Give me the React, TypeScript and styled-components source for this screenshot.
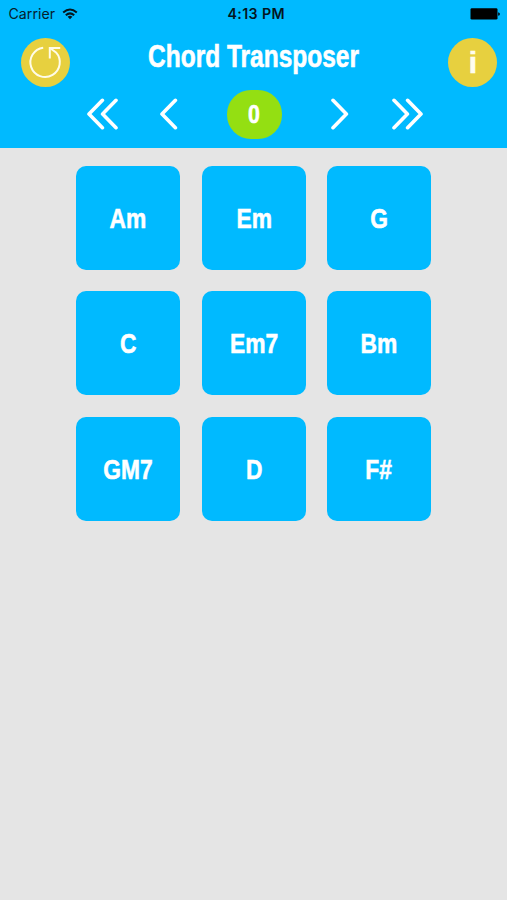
import React from "react";
import styled, { createGlobalStyle } from "styled-components";

const GlobalStyle = createGlobalStyle`
  body { margin: 0; background: #e5e5e5; }
  button { appearance: none; border: 0; padding: 0; margin: 0; background: none; color: inherit; font: inherit; }
  svg { display: block; }
`;

const Screen = styled.div`
  width: 507px;
  height: 900px;
  overflow: hidden;
  background: #e5e5e5;
  color: #fff;
  font-family: "Liberation Sans", Arial, sans-serif;
`;

const Header = styled.header`
  height: 147.5px;
  background: #00baff;
`;

const StatusBar = styled.div`
  display: grid;
  grid-template-columns: 1fr auto 1fr;
  align-items: center;
  height: 27px;
  padding: 0 7px 0 8.5px;
  box-sizing: border-box;
  color: #06202c;
  font: 400 14.2px/27px Inter, "Liberation Sans", sans-serif;
`;

const Carrier = styled.div`
  display: flex;
  align-items: center;
  gap: 6.5px;
`;

const Clock = styled.div`
  padding-left: 4px;
  font-weight: 600;
  letter-spacing: 0.4px;
  color: #04161f;
`;

const Battery = styled.svg`
  justify-self: end;
`;

const TitleBar = styled.div`
  display: flex;
  justify-content: space-between;
  height: 49px;
  padding: 10.5px 9.7px 0 20.7px;
`;

const RoundButton = styled.button`
  display: flex;
  align-items: center;
  justify-content: center;
  width: 49px;
  height: 49px;
  border-radius: 50%;
  background: #e7d03f;
`;

const InfoLetter = styled.span`
  color: #fffdf0;
  font-size: 30px;
  font-weight: 700;
  line-height: 49px;
  -webkit-text-stroke: 0.6px currentColor;
`;

const Title = styled.h1`
  display: flex;
  justify-content: center;
  flex: 1;
  margin: 0;
  padding-right: 11px;
  font-size: 31px;
  line-height: 37px;
`;

const Condensed = styled.span<{ $ratio: number }>`
  display: inline-block;
  font-weight: 700;
  white-space: nowrap;
  -webkit-text-stroke: 0.6px currentColor;
  transform: scaleX(${(p) => p.$ratio});
`;

const Stepper = styled.nav`
  display: grid;
  grid-template-columns: 67px 67px 103px 69.5px 65px;
  justify-items: center;
  align-items: center;
  height: 49px;
  padding: 3.2px 0 0 68.5px;
`;

const Offset = styled.div`
  display: flex;
  align-items: center;
  justify-content: center;
  width: 55px;
  height: 49px;
  border-radius: 24px;
  background: #94df12;
  font-size: 25px;
  line-height: 51px;
`;

const ChordGrid = styled.main`
  display: grid;
  grid-template-columns: 125.7px 124.7px 104px;
  grid-auto-rows: 104px;
  row-gap: 21.7px;
  padding: 18.2px 0 0 76.3px;
`;

const Chord = styled.button`
  display: flex;
  align-items: center;
  justify-content: center;
  width: 104px;
  height: 104px;
  border-radius: 10px;
  background: #00baff;
  font-size: 28.5px;
  line-height: 32px;
`;

const chords = ["Am", "Em", "G", "C", "Em7", "Bm", "GM7", "D", "F#"];

function Chevron({ count = 1, forward = false }: { count?: number; forward?: boolean }) {
  const width = count === 2 ? 31 : 18;
  const heads = Array.from({ length: count }, (_, i) => {
    const x = i * 13.6;
    return forward ? `M${x + 2} 2.3 L${x + 15.4} 16 L${x + 2} 29.7` : `M${x + 15.4} 2.3 L${x + 2} 16 L${x + 15.4} 29.7`;
  });
  return (
    <svg width={width} height="32" viewBox={`0 0 ${width} 32`} fill="none" stroke="#fff" strokeWidth="3.6" strokeLinecap="round" strokeLinejoin="round">
      <path d={heads.join(" ")} />
    </svg>
  );
}

export default function App() {
  return (
    <>
      <GlobalStyle />
      <Screen>
        <Header>
          <StatusBar>
            <Carrier>
              Carrier
              <svg width="16" height="12" viewBox="0 0 16 12" fill="none" stroke="#04161f" strokeWidth="2">
                <path d="M1.2 4.4 Q8 -1.5 14.8 4.4" />
                <path d="M3.8 7.2 Q8 3.6 12.2 7.2" />
                <path d="M5.6 8.7 Q8 6.8 10.4 8.7 L8 11.2Z" fill="#04161f" stroke="none" />
              </svg>
            </Carrier>
            <Clock>4:13 PM</Clock>
            <Battery width="30" height="12" viewBox="0 0 30 12" fill="#000">
              <rect x="0.5" y="0.2" width="27" height="11.4" rx="1.4" />
              <path d="M28.2 4.2 Q29.9 4.6 29.9 6 Q29.9 7.4 28.2 7.8Z" />
            </Battery>
          </StatusBar>
          <TitleBar>
            <RoundButton aria-label="Reset">
              <svg width="49" height="49" viewBox="0 0 49 49" fill="none" stroke="#fffce8" strokeWidth="2">
                <path d="M22.2 9.7 A14.7 14.7 0 1 0 35 14.4 L29 10" />
                <path d="M39.2 9.9 H28.8 V20.4" />
              </svg>
            </RoundButton>
            <Title><Condensed $ratio={0.79}>Chord Transposer</Condensed></Title>
            <RoundButton aria-label="Information">
              <InfoLetter>i</InfoLetter>
            </RoundButton>
          </TitleBar>
          <Stepper>
            <button aria-label="Down two"><Chevron count={2} /></button>
            <button aria-label="Down one"><Chevron /></button>
            <Offset><Condensed $ratio={0.85}>0</Condensed></Offset>
            <button aria-label="Up one"><Chevron forward /></button>
            <button aria-label="Up two"><Chevron count={2} forward /></button>
          </Stepper>
        </Header>
        <ChordGrid>
          {chords.map((name) => (
            <Chord key={name}><Condensed $ratio={0.8}>{name}</Condensed></Chord>
          ))}
        </ChordGrid>
      </Screen>
    </>
  );
}
